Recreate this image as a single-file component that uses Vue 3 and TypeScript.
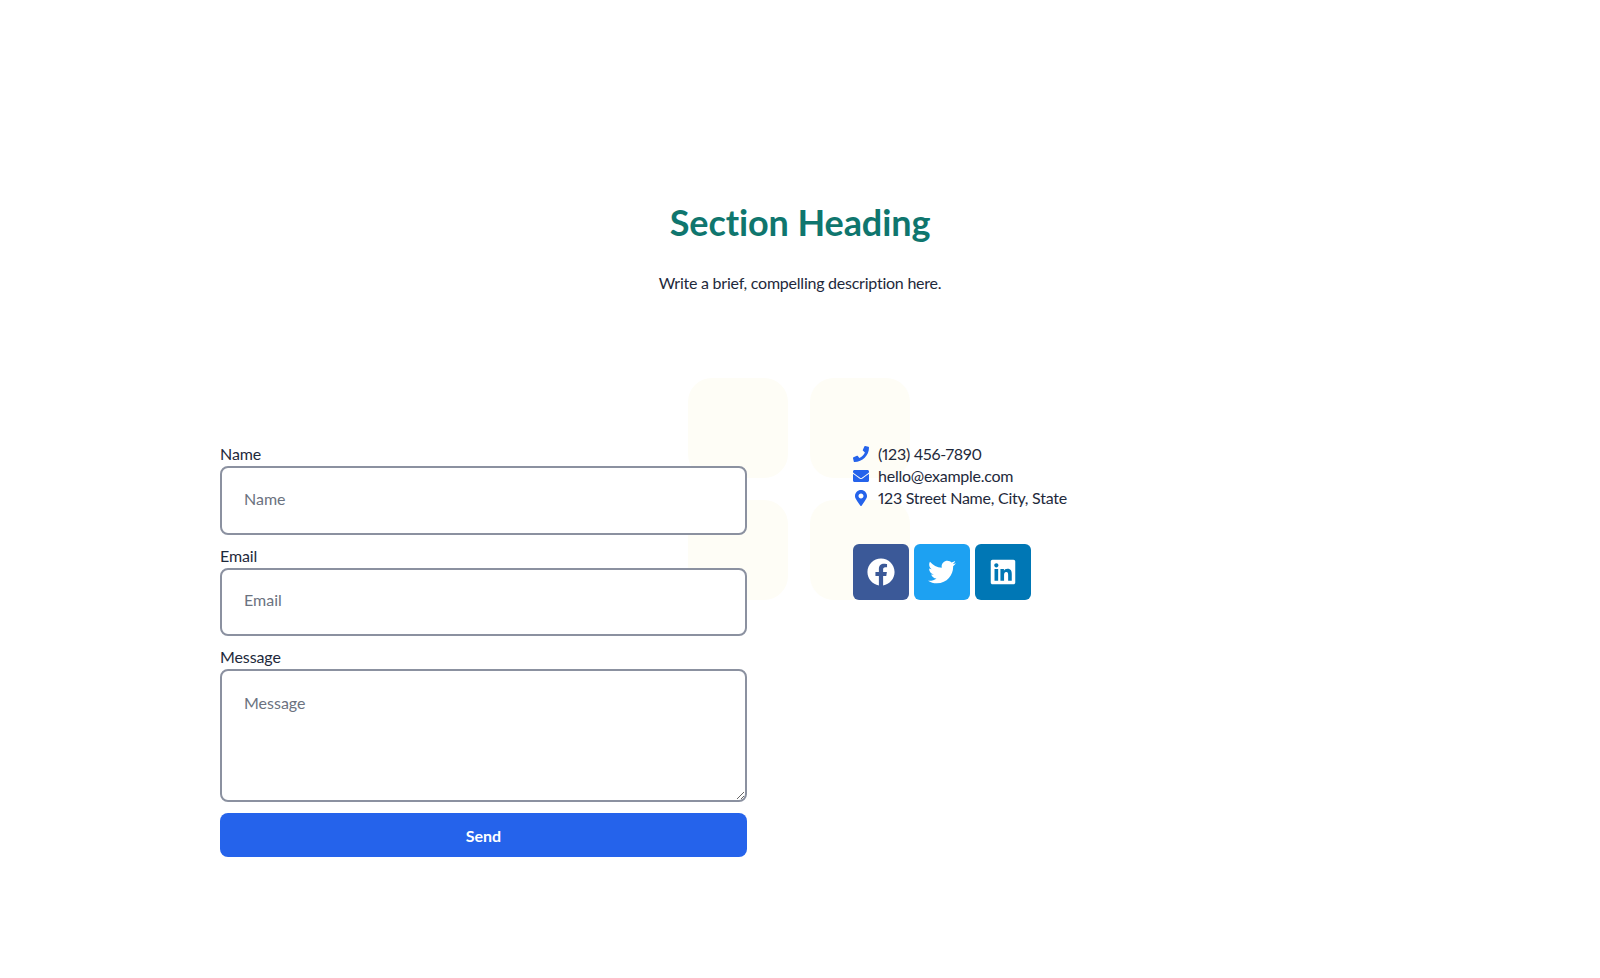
<template>
  <section class="contact">
    <div class="deco" aria-hidden="true">
      <span v-for="n in 4" :key="n"></span>
    </div>

    <header class="intro">
      <h2>Section Heading</h2>
      <p>Write a brief, compelling description here.</p>
    </header>

    <div class="columns">
      <form class="form" @submit.prevent>
        <div class="field">
          <label for="name">Name</label>
          <input id="name" type="text" placeholder="Name" />
        </div>
        <div class="field">
          <label for="email">Email</label>
          <input id="email" type="email" placeholder="Email" />
        </div>
        <div class="field">
          <label for="message">Message</label>
          <textarea id="message" placeholder="Message"></textarea>
        </div>
        <button type="submit" class="send">Send</button>
      </form>

      <aside class="info">
        <ul class="details">
          <li v-for="item in details" :key="item.text">
            <span class="detail-icon">
              <svg :viewBox="item.box" :width="item.w" height="16" fill="#2563eb"><path :d="item.path" /></svg>
            </span>
            {{ item.text }}
          </li>
        </ul>
        <div class="socials">
          <a v-for="s in socials" :key="s.name" href="#" :aria-label="s.name" :style="{ background: s.color }">
            <svg :viewBox="s.box" width="28" height="28" fill="#fff"><path :d="s.path" /></svg>
          </a>
        </div>
      </aside>
    </div>
  </section>
</template>

<script setup lang="ts">
const details = [
  {
    text: '(123) 456-7890',
    box: '0 0 512 512',
    w: 16,
    path: 'M493.4 24.6l-104-24c-11.3-2.6-22.9 3.3-27.5 13.9l-48 112c-4.2 9.8-1.4 21.3 6.9 28l60.6 49.6c-36 76.7-98.9 140.5-177.2 177.2l-49.6-60.6c-6.8-8.3-18.2-11.1-28-6.9l-112 48C3.9 366.5-2 378.1.6 389.4l24 104C27.1 504.2 36.7 512 48 512c256.1 0 464-207.5 464-464 0-11.2-7.7-20.9-18.6-23.4z'
  },
  {
    text: 'hello@example.com',
    box: '0 0 512 512',
    w: 16,
    path: 'M502.3 190.8c3.9-3.1 9.7-.2 9.7 4.7V400c0 26.5-21.5 48-48 48H48c-26.5 0-48-21.5-48-48V195.6c0-5 5.7-7.8 9.7-4.7 22.4 17.4 52.1 39.5 154.1 113.6 21.1 15.4 56.7 47.8 92.2 47.6 35.7.3 72-32.8 92.3-47.6 102-74.1 131.6-96.3 154-113.7zM256 320c23.2.4 56.6-29.2 73.4-41.4 132.7-96.3 142.8-104.7 173.4-128.7 5.8-4.5 9.2-11.5 9.2-18.9v-19c0-26.5-21.5-48-48-48H48C21.5 64 0 85.5 0 112v19c0 7.4 3.4 14.3 9.2 18.9 30.6 23.9 40.7 32.4 173.4 128.7 16.8 12.2 50.2 41.8 73.4 41.4z'
  },
  {
    text: '123 Street Name, City, State',
    box: '0 0 384 512',
    w: 12,
    path: 'M172.268 501.67C26.97 291.031 0 255.197 0 192 0 85.961 85.961 0 192 0s192 85.961 192 192c0 63.197-26.97 99.031-172.268 309.67-9.535 13.774-29.93 13.773-39.464 0zM192 272c44.183 0 80-35.817 80-80s-35.817-80-80-80-80 35.817-80 80 35.817 80 80 80z'
  }
]

const socials = [
  {
    name: 'Facebook',
    color: '#3b5998',
    box: '0 0 512 512',
    path: 'M504 256C504 119 393 8 256 8S8 119 8 256c0 123.78 90.69 226.38 209.25 245V327.69h-63V256h63v-54.64c0-62.15 37-96.48 93.67-96.48 27.14 0 55.52 4.84 55.52 4.84v61h-31.28c-30.8 0-40.41 19.12-40.41 38.73V256h68.78l-11 71.69h-57.78V501C413.31 482.38 504 379.78 504 256z'
  },
  {
    name: 'Twitter',
    color: '#1da1f2',
    box: '0 0 512 512',
    path: 'M459.37 151.716c.325 4.548.325 9.097.325 13.645 0 138.72-105.583 298.558-298.558 298.558-59.452 0-114.68-17.219-161.137-47.106 8.447.974 16.568 1.299 25.34 1.299 49.055 0 94.213-16.568 130.274-44.832-46.132-.975-84.792-31.188-98.112-72.772 6.498.974 12.995 1.624 19.818 1.624 9.421 0 18.843-1.3 27.614-3.573-48.081-9.747-84.143-51.98-84.143-102.985v-1.299c13.969 7.797 30.214 12.67 47.431 13.319-28.264-18.843-46.781-51.005-46.781-87.391 0-19.492 5.197-37.36 14.294-52.954 51.655 63.675 129.3 105.258 216.365 109.807-1.624-7.797-2.599-15.918-2.599-24.04 0-57.828 46.782-104.934 104.934-104.934 30.213 0 57.502 12.67 76.67 33.137 23.715-4.548 46.456-13.32 66.599-25.34-7.798 24.366-24.366 44.833-46.132 57.827 21.117-2.273 41.584-8.122 60.426-16.243-14.292 20.791-32.161 39.308-52.628 54.253z'
  },
  {
    name: 'LinkedIn',
    color: '#0077b5',
    box: '0 0 448 512',
    path: 'M416 32H31.9C14.3 32 0 46.5 0 64.3v383.4C0 465.5 14.3 480 31.9 480H416c17.6 0 32-14.5 32-32.3V64.3c0-17.8-14.4-32.3-32-32.3zM135.4 416H69V202.2h66.5V416zm-33.2-243c-21.3 0-38.5-17.3-38.5-38.5S80.9 96 102.2 96c21.2 0 38.5 17.3 38.5 38.5 0 21.3-17.2 38.5-38.5 38.5zm282.1 243h-66.4V312c0-24.8-.5-56.7-34.5-56.7-34.6 0-39.9 27-39.9 54.9V416h-66.4V202.2h63.7v29.2h.9c8.9-16.8 30.6-34.5 62.9-34.5 67.2 0 79.7 44.3 79.7 101.9V416z'
  }
]
</script>

<style scoped>
.contact {
  position: relative;
  box-sizing: border-box;
  height: 978px;
  padding-top: 203px;
  color: #1e293b;
  font-family: 'Lato', sans-serif;
}

.deco {
  position: absolute;
  left: 688px;
  top: 378px;
  display: grid;
  grid-template-columns: 100px 100px;
  grid-auto-rows: 100px;
  gap: 22px;
}

.deco span {
  background: #fefdf6;
  border-radius: 24px;
}

.intro {
  position: relative;
  text-align: center;
  margin-bottom: 147px;
}

.intro h2 {
  margin: 0 0 30px;
  font-size: 36px;
  line-height: 38px;
  font-weight: 700;
  color: #0f766e;
  letter-spacing: -0.1px;
}

.intro p {
  margin: 0;
  font-size: 16px;
  line-height: 24px;
  letter-spacing: -0.24px;
}

.columns {
  position: relative;
  width: 1160px;
  margin: 0 auto;
  display: grid;
  grid-template-columns: 527px 1fr;
  column-gap: 106px;
}

.form {
  display: flex;
  flex-direction: column;
}

.field {
  display: flex;
  flex-direction: column;
  margin-bottom: 9px;
}

.field label {
  font-size: 16px;
  line-height: 24px;
  letter-spacing: -0.1px;
}

.field input,
.field textarea {
  box-sizing: border-box;
  width: 100%;
  padding: 0 22px;
  border: 2px solid #8b91a0;
  border-radius: 8px;
  background: #fff;
  color: #1e293b;
  font-family: inherit;
  font-size: 16px;
  outline: none;
}

.field input {
  height: 68.5px;
  padding-bottom: 4px;
}

.field textarea {
  display: block;
  height: 133px;
  padding-top: 22px;
  line-height: 20px;
}

.field input::placeholder,
.field textarea::placeholder {
  color: #6b7280;
  opacity: 1;
}

.field:last-of-type {
  margin-bottom: 11px;
}

.send {
  height: 44px;
  border: 0;
  border-radius: 8px;
  background: #2563eb;
  color: #fff;
  font-family: inherit;
  font-size: 16px;
  font-weight: 700;
  cursor: pointer;
}

.details {
  list-style: none;
  margin: 0;
  padding: 0;
  font-size: 16px;
  letter-spacing: -0.25px;
  font-variant-numeric: proportional-nums;
}

.details li {
  display: flex;
  align-items: center;
  gap: 9px;
  height: 22px;
  line-height: 22px;
}

.details li:first-child {
  margin-top: 1px;
}

.detail-icon {
  display: flex;
  justify-content: center;
  width: 16px;
}

.socials {
  display: flex;
  gap: 5px;
  margin-top: 35px;
}

.socials a {
  display: flex;
  align-items: center;
  justify-content: center;
  width: 56px;
  height: 56px;
  border-radius: 6px;
}
</style>
